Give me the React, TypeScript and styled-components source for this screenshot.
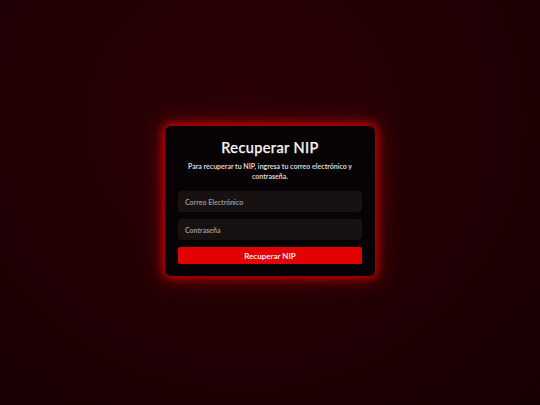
import styled, { createGlobalStyle } from 'styled-components';

const GlobalStyle = createGlobalStyle`
  html, body {
    margin: 0;
    padding: 0;
    height: 100%;
  }
  body {
    font-family: Lato, "Open Sans", sans-serif;
    background: #1d0003;
  }
`;

const Page = styled.div`
  width: 540px;
  height: 405px;
  display: flex;
  align-items: center;
  justify-content: center;
  background: radial-gradient(ellipse at 45% 30%, #2b0006 0%, #220004 50%, #170002 100%);
`;

const Card = styled.div`
  width: 210px;
  height: 150px;
  box-sizing: border-box;
  margin-top: -3px;
  padding: 12px 13px 12px;
  border-radius: 6px;
  background: #070203;
  box-shadow: 0 0 10px 2px rgba(255, 0, 0, 0.75), 0 0 24px 4px rgba(200, 0, 0, 0.35);
  display: flex;
  flex-direction: column;
`;

const Title = styled.h1`
  margin: 0;
  text-align: center;
  color: #f7f4f4;
  font-size: 14.5px;
  font-weight: 500;
  line-height: 19px;
  letter-spacing: 0.4px;
  -webkit-text-stroke: 0.25px #f7f4f4;
`;

const Subtitle = styled.p`
  margin: 4px 0 10px;
  text-align: center;
  color: #dcd5d6;
  font-size: 7px;
  font-weight: 700;
  line-height: 10px;
`;

const Input = styled.input`
  width: 100%;
  height: 21px;
  flex: none;
  box-sizing: border-box;
  border: none;
  outline: none;
  border-radius: 4px;
  background: #181111;
  color: #eee;
  padding: 0 7px;
  margin-bottom: 7px;
  font-family: inherit;
  font-size: 7px;
  font-weight: 700;
  &::placeholder {
    color: #9a9393;
  }
`;

const Button = styled.button`
  width: 100%;
  height: 17px;
  flex: none;
  border: none;
  border-radius: 2px;
  background: #e20000;
  color: #fbe9e9;
  font-family: inherit;
  font-size: 8px;
  font-weight: 700;
  cursor: pointer;
`;

export default function App() {
  return (
    <>
      <GlobalStyle />
      <Page>
        <Card>
          <Title>Recuperar NIP</Title>
          <Subtitle>
            Para recuperar tu NIP, ingresa tu correo electrónico y contraseña.
          </Subtitle>
          <Input type="email" placeholder="Correo Electrónico" />
          <Input type="password" placeholder="Contraseña" />
          <Button type="button">Recuperar NIP</Button>
        </Card>
      </Page>
    </>
  );
}
